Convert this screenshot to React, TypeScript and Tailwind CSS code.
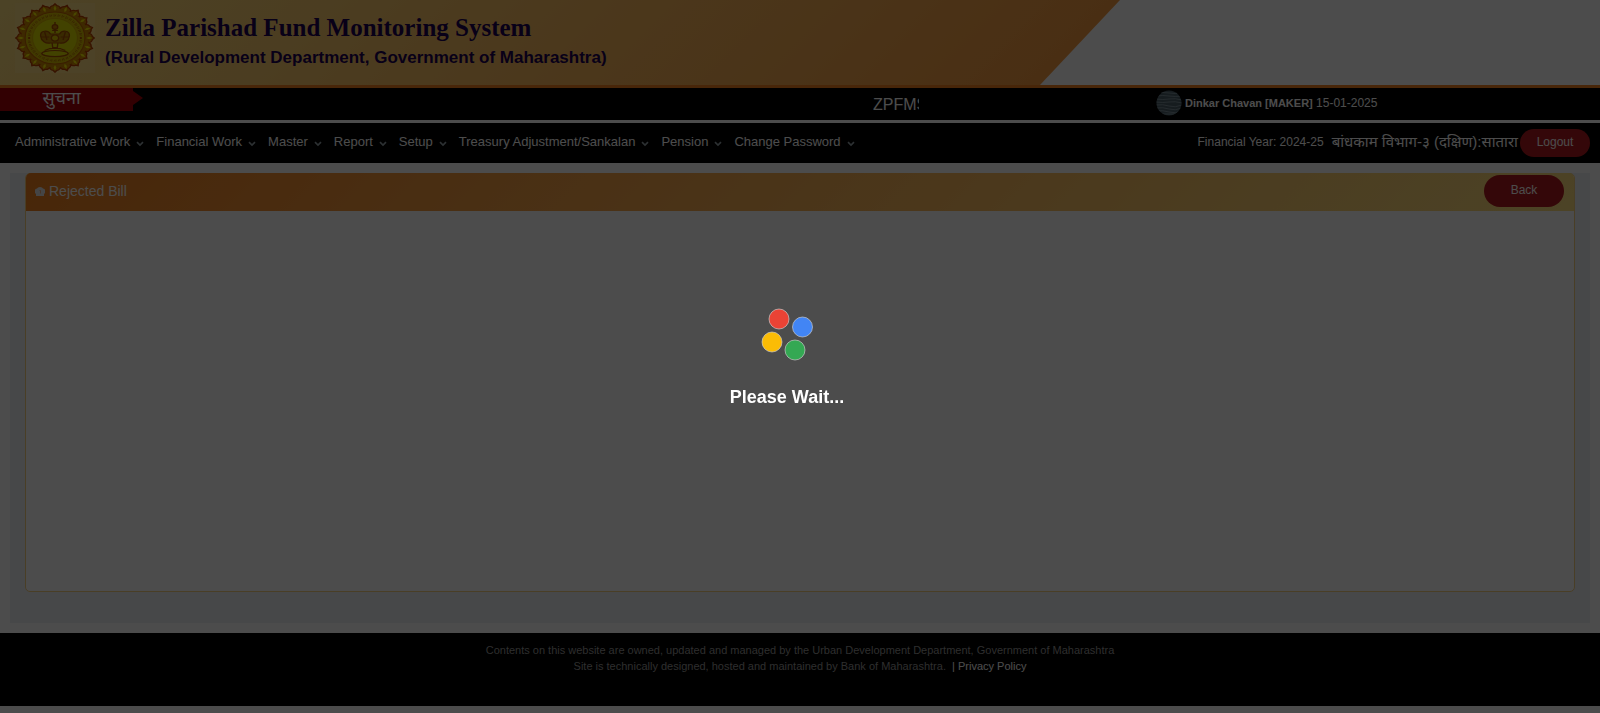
import React from "react";

const menu = [
  "Administrative Work",
  "Financial Work",
  "Master",
  "Report",
  "Setup",
  "Treasury Adjustment/Sankalan",
  "Pension",
  "Change Password",
];

const petals = Array.from({ length: 20 }, (_, i) => i * 18);
const dots = Array.from({ length: 40 }, (_, i) => i * 9).filter((a) => a !== 90 && a !== 270);

function Emblem() {
  return (
    <svg viewBox="0 0 80 70" className="h-[70px] w-20 bg-[#ffe9a0]/30" role="img" aria-label="Government emblem">
      <g transform="translate(40 35) scale(1.15 1)">
        {petals.map((a) => (
          <path key={a} transform={`rotate(${a})`} d="M-5-28.500Q-4.500-32-1.500-32.500L0-34.200L1.500-32.500Q4.500-32 5-28.500Z" fill="#d08c00" stroke="#b83c00" strokeWidth="1.2" />
        ))}
        <circle r="29.5" fill="#cc8a00" />
        {petals.map((a) => (
          <path key={a} transform={`rotate(${a})`} d="M0-32.500L1.200-29.500L0-27L-1.200-29.500Z" fill="#f4ee00" />
        ))}
        <circle r="26" fill="#d8be00" stroke="#c06400" strokeWidth="1" />
        {dots.map((a) => (
          <path key={a} transform={`rotate(${a})`} d="M-.8-23.8V-21.400M.8-23.500L.2-21.800" stroke="#b87c00" strokeWidth=".8" />
        ))}
        <circle cx="-22.500" r="1" fill="#a84a00" />
        <circle cx="22.500" r="1" fill="#a84a00" />
        <circle r="19.5" fill="#dcdc00" stroke="#c8a000" strokeWidth=".6" />
        <g fill="none" stroke="#a85000" strokeWidth="1.2">
          <circle cy="-11" r="2.4" fill="#c88400" />
          <path d="M0-16V-13M0-9V-5M-2.500-7.500H2.500" />
          <path d="M-4-4C-6-8-13-8-12.500-2C-12 3-8 6-4 5H4C8 6 12 3 12.500-2C13-8 6-8 4-4Z" fill="#c08c00" />
          <circle cy="0" r="3.2" fill="#dcc800" />
          <path d="M-9-6L-7 2M9-6L7 2M-12-1H-5M12-1H5" />
          <path d="M-2.500 5L-2 9.500H2L2.500 5M-5 10.500H5" />
          <ellipse cy="15.500" rx="11.5" ry="3" />
          <path d="M-9 12.500C-4 9.500 4 9.500 9 12.500" />
        </g>
      </g>
    </svg>
  );
}

function Chevron() {
  return (
    <svg viewBox="0 0 8 6" className="mt-1 h-1.5 w-2" fill="none" stroke="#93a1a8" strokeWidth="1.7" aria-hidden="true">
      <path d="M1 1.2L4 4L7 1.2" />
    </svg>
  );
}

function Avatar() {
  return (
    <svg viewBox="0 0 26 26" className="size-[26px]" role="img" aria-label="User photo">
      <clipPath id="face">
        <circle cx="13" cy="13" r="12.5" />
      </clipPath>
      <g clipPath="url(#face)">
        <rect width="26" height="26" fill="#4a5e68" />
        <path
          d="M0 3Q7 2 13 3T26 3M0 6Q7 5 13 6T26 6M0 9Q7 10 13 9T26 10M0 12Q7 13 13 12T26 13M0 15Q7 14 13 16T26 15M0 18Q7 17 13 19T26 18M0 21Q7 20 13 22T26 21M0 24H26"
          fill="none"
          stroke="#7d909a"
          strokeWidth="1"
        />
      </g>
    </svg>
  );
}

function Loader() {
  return (
    <div className="fixed inset-0 z-10 flex flex-col items-center bg-black/70 pt-[308px] pr-[26px]" role="status">
      <svg viewBox="0 0 54 54" className="size-[54px]" strokeWidth=".6" stroke="#d8d8d8" aria-hidden="true">
        <circle cx="19" cy="11" r="10" fill="#ea4335" />
        <circle cx="42.500" cy="19" r="10" fill="#4285f4" />
        <circle cx="12" cy="34" r="10" fill="#fbbc05" />
        <circle cx="35" cy="42" r="10" fill="#34a853" />
      </svg>
      <p className="mt-6 text-lg leading-[22px] font-bold text-white">Please Wait...</p>
    </div>
  );
}

export default function App() {
  return (
    <div className="bg-white font-['Liberation_Sans','Noto_Sans',sans-serif] text-xs text-white">
      <header className="border-b-3 border-[#f08020] bg-white">
        <div className="flex h-[85px] w-[70%] bg-linear-135 from-[#fde080] to-[#f5963c] pl-[15px] [clip-path:polygon(0_0,100%_0,calc(100%_-_80px)_100%,0_100%)]">
          <div className="pt-[3px]">
            <Emblem />
          </div>
          <div className="pt-3 pl-2.5 text-[#1c0050]">
            <h1 className="font-['Liberation_Serif',serif] text-[25px] leading-8 font-bold">Zilla Parishad Fund Monitoring System</h1>
            <p className="text-[17px] leading-7 font-bold">(Rural Development Department, Government of Maharashtra)</p>
          </div>
        </div>
      </header>

      <div className="flex h-8 bg-black">
        <div className="flex items-start">
          <div className="h-[23px] w-[133px] bg-[#a80008] pr-2.5 text-center text-lg leading-[21px]">सुचना</div>
          <svg viewBox="0 0 10 14" className="mt-[3px] h-3.5 w-2.5" aria-hidden="true">
            <path d="M0 0L10 7L0 14Z" fill="#a80008" />
          </svg>
        </div>
        <div className="flex flex-1 justify-end overflow-hidden">
          <div className="w-[46px] overflow-hidden text-base leading-[34px] whitespace-nowrap">ZPFMS</div>
        </div>
        <div className="flex w-[681px] items-center gap-[3px] pb-0.5 pl-[237px]">
          <Avatar />
          <span>
            <b className="text-[11px]">Dinkar Chavan [MAKER]</b> 15-01-2025
          </span>
        </div>
      </div>

      <nav className="mt-[3px] flex h-10 items-center justify-between bg-black pr-2.5 pl-[15px]">
        <ul className="flex gap-3 pb-0.5 text-[13px]">
          {menu.map((m) => (
            <li key={m}>
              <a href="#" className="flex items-center gap-1.5">
                {m}
                <Chevron />
              </a>
            </li>
          ))}
        </ul>
        <div className="flex items-center">
          <span className="pb-0.5">Financial Year: 2024-25</span>
          <span className="pb-0.5 pl-2 text-[15px] leading-5">बांधकाम विभाग-३ (दक्षिण):सातारा</span>
          <button className="ml-0.5 h-7 w-[70px] rounded-full bg-[#b01a1e] pb-0.5">Logout</button>
        </div>
      </nav>

      <main className="m-2.5 bg-[#eef0f4] px-[15px] pb-[31px]">
        <section className="rounded-[5px] border border-[#f5cf80] bg-white">
          <div className="-mt-px flex h-[38px] items-center justify-between rounded-t-[5px] bg-linear-135 from-[#f0801e] to-[#fde080] pr-2.5 pb-0.5 pl-[9px]">
            <h2 className="flex items-center gap-1 text-sm">
              <svg viewBox="0 0 10 9" className="h-[9px] w-2.5" aria-hidden="true">
                <path d="M0 3Q0 1.500 2 1.500Q2.500 0 5 0Q7.500 0 8 1.500Q10 1.500 10 3V6.500H9V9H1V6.500H0Z" fill="#e8e8e8" />
                <path d="M4.500 3.500H5.500V6.500" fill="none" stroke="#f0a060" strokeWidth=".8" />
              </svg>
              Rejected Bill
            </h2>
            <button className="h-8 w-20 rounded-full bg-[#b01a1e] pb-0.5">Back</button>
          </div>
          <div className="h-[380px]" />
        </section>
      </main>

      <footer className="h-[73px] bg-black pt-[9px] text-center text-[11px] leading-4 text-[#999999]">
        <p>Contents on this website are owned, updated and managed by the Urban Development Department, Government of Maharashtra</p>
        <p>
          Site is technically designed, hosted and maintained by Bank of Maharashtra.&nbsp;{" "}
          <a href="#" className="text-white">
            | Privacy Policy
          </a>
        </p>
      </footer>
      <Loader />
    </div>
  );
}
